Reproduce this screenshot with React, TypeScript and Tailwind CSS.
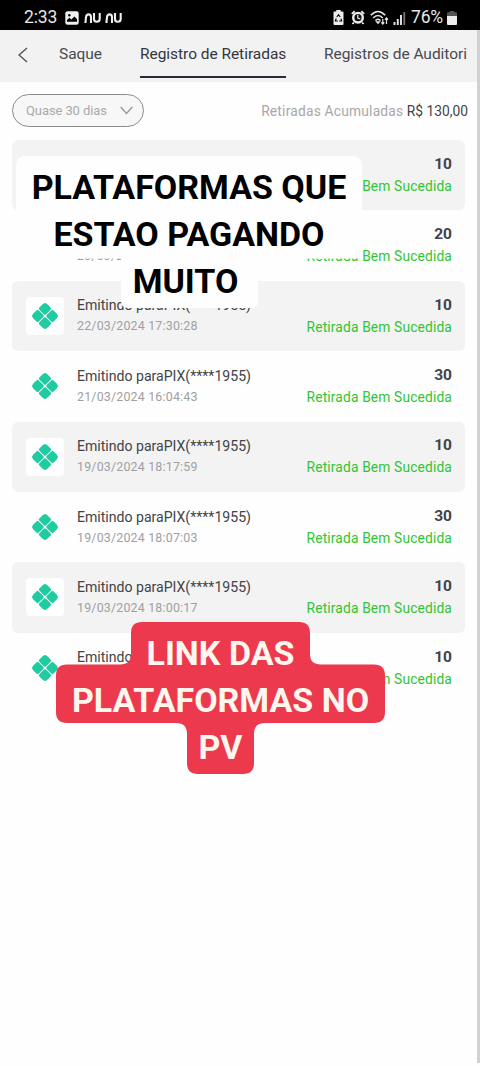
import React from 'react';

type Entry = { date: string; amount: string };

const entries: Entry[] = [
  { date: '24/03/2024 16:22:10', amount: '10' },
  { date: '23/03/2024 17:12:35', amount: '20' },
  { date: '22/03/2024 17:30:28', amount: '10' },
  { date: '21/03/2024 16:04:43', amount: '30' },
  { date: '19/03/2024 18:17:59', amount: '10' },
  { date: '19/03/2024 18:07:03', amount: '30' },
  { date: '19/03/2024 18:00:17', amount: '10' },
  { date: '19/03/2024 17:51:26', amount: '10' },
];

function PixIcon() {
  return (
    <svg viewBox="0 0 26 26" className="size-[26px]" fill="#1fcba0">
      <g transform="rotate(45 13 13)">
        <rect x="3" y="3" width="9.5" height="9.5" rx="1.6" />
        <rect x="13.5" y="3" width="9.5" height="9.5" rx="1.6" />
        <rect x="3" y="13.5" width="9.5" height="9.5" rx="1.6" />
        <rect x="13.5" y="13.5" width="9.5" height="9.5" rx="1.6" />
        <path d="M2.5 2.5H6Q2.5 2.5 2.5 6ZM23.5 2.5V6Q23.5 2.5 20 2.5ZM23.5 23.5H20Q23.5 23.5 23.5 20ZM2.5 23.5V20Q2.5 23.5 6 23.5Z" fill="#fff" stroke="#fff" strokeWidth="1.2" />
      </g>
    </svg>
  );
}

function NuLogo() {
  return (
    <svg viewBox="0 0 18 12" className="h-3 w-[18px]" fill="none" stroke="#eee" strokeWidth="2.1">
      <path d="M1.4 11L2 5.2Q2.4 2.4 4.6 2.4Q7 2.4 7 5.2V11" />
      <path d="M10 1V7Q10 9.8 12.7 9.8Q15.7 9.8 15.7 7V1" />
    </svg>
  );
}

function StatusBar() {
  return (
    <div className="flex h-[30px] items-center bg-black pl-6 pt-[5px] text-[#e6e6e6]">
      <span className="w-[41px] whitespace-nowrap text-[17.5px] tracking-[-0.1px]">2:33</span>
      <svg viewBox="0 0 14 14" className="size-3.5">
        <rect x=".3" y=".3" width="13.4" height="13.4" rx="2.2" fill="#eee" />
        <circle cx="4.3" cy="4.3" r="1.2" fill="#000" />
        <path d="M2 10.8V9L4.4 6.8L6.4 8.4L9.4 5.4L12 8V10.8Z" fill="#000" />
      </svg>
      <div className="ml-[5px] flex gap-[3px]">
        <NuLogo />
        <NuLogo />
      </div>
      <div className="ml-auto flex items-center pr-[23px]">
        <svg viewBox="0 0 11 15" className="h-[15px] w-[11px]">
          <path d="M3.3 0H7.7V1.5H9.5Q10.5 1.5 10.5 2.5V14Q10.5 15 9.5 15H1.5Q.5 15 .5 14V2.5Q.5 1.5 1.5 1.5H3.3Z" fill="#eee" />
          <path d="M3.8 7L5.5 4.6L7.2 7M8 8.6L8.6 11H6.2M4.8 11H2.4L3.2 8.4" fill="none" stroke="#000" strokeWidth="1.1" />
        </svg>
        <svg viewBox="0 0 14 15" className="ml-[7px] h-[15px] w-[14px]">
          <circle cx="7" cy="7.7" r="6" fill="#eee" />
          <path d="M.8 3.9L3.7 1.3M13.2 3.9L10.3 1.3M2.8 12.5L1.5 14M11.2 12.5L12.5 14" stroke="#eee" strokeWidth="1.9" />
          <circle cx="7" cy="7.7" r="3.6" fill="#111" />
          <path d="M6.8 4.8V8L9.3 9" fill="none" stroke="#eee" strokeWidth="1.2" />
        </svg>
        <svg viewBox="0 0 19 15" className="ml-[5px] h-[15px] w-[19px]" fill="none" stroke="#e6e6e6" strokeWidth="1.6">
          <path d="M.8 5.3Q8 -2.4 15.2 5.3M3.2 8Q8 3 12.8 8M5.5 10.6Q8 8 10.5 10.6" />
          <path d="M7 12L8 13.1L9 12Z" fill="#e6e6e6" />
          <path d="M12.8 9V14M11.3 12.3L12.8 14L14.3 12.3M16.5 14V8M15 9.7L16.5 8L18 9.7" strokeWidth="1.2" />
        </svg>
        <svg viewBox="0 0 13 14" className="ml-[4px] h-[14px] w-[13px]">
          <path d="M.5 11H2.5V14H.5ZM3.8 8H5.8V14H3.8ZM7 4H9V14H7Z" fill="#ddd" />
          <path d="M10.4 1H12.2V14H10.4Z" fill="#777" />
        </svg>
        <span className="ml-[5px] w-[36px] whitespace-nowrap text-[17.5px] tracking-[-0.2px]">76%</span>
        <svg viewBox="0 0 10 14" className="h-[14px] w-[10px]">
          <path d="M2.7 0H7.3V1.2H9Q10 1.2 10 2.2V5H0V2.2Q0 1.2 1 1.2H2.7Z" fill="#555" />
          <path d="M0 5H10V13Q10 14 9 14H1Q0 14 0 13Z" fill="#eee" />
        </svg>
      </div>
    </div>
  );
}

function Tabs() {
  return (
    <nav className="flex h-[52px] w-[477px] bg-[#f2f2f3] text-[15.5px] leading-[48px] tracking-[-0.04px] text-[#484a4f]">
      <svg viewBox="0 0 10 16" className="ml-[18px] mt-[17px] h-4 w-[10px]" fill="none" stroke="#55575b" strokeWidth="1.5">
        <path d="M9 1L1 8L9 15" />
      </svg>
      <span className="ml-[31px] w-[81px] whitespace-nowrap">Saque</span>
      <span className="h-12 w-[146px] whitespace-nowrap border-b-2 border-[#282c35] text-[#33363e]">Registro de Retiradas</span>
      <span className="ml-[38px] whitespace-nowrap">Registros de Auditori</span>
    </nav>
  );
}

function Row({ entry, shaded }: { entry: Entry; shaded: boolean }) {
  return (
    <li className={`flex h-[70.4px] rounded-md pl-[13.5px] pr-[13px] ${shaded ? 'bg-[#f3f3f4]' : ''}`}>
      <div className="mt-[16px] flex size-[38px] items-center justify-center rounded bg-[#fefefe]">
        <PixIcon />
      </div>
      <div className="ml-[13.5px] whitespace-nowrap pt-[14.7px]">
        <p className="text-[14.1px] leading-5 tracking-[-0.01px] text-[#424347]">Emitindo paraPIX(****1955)</p>
        <p className="text-[12.4px] leading-[21px] tracking-[0.2px] text-[#a0a0a2]">{entry.date}</p>
      </div>
      <div className="ml-auto whitespace-nowrap pt-[12.8px] text-right">
        <p className="text-[15.5px] font-bold leading-[22px] text-[#424347]">{entry.amount}</p>
        <p className="text-[13.8px] leading-[22.4px] tracking-[0.14px] text-[#32c532]">Retirada Bem Sucedida</p>
      </div>
    </li>
  );
}

export default function App() {
  return (
    <div className="relative h-[1066px] w-[480px] overflow-hidden bg-[#fefefe] font-[Roboto,sans-serif]">
      <StatusBar />
      <Tabs />
      <div className="flex h-[58px] items-start justify-between pl-3 pr-[12px] pt-3">
        <button className="flex h-[33px] w-[132px] items-center rounded-full border border-[#8b8b8b] bg-[#f7f7f7] pl-[13px] text-[13px] text-[#aaa]">
          <span className="w-[94px] whitespace-nowrap text-left tracking-[-0.1px]">Quase 30 dias</span>
          <svg viewBox="0 0 13 9" className="h-[9px] w-[13px]" fill="none" stroke="#999" strokeWidth="1.4">
            <path d="M.7 1L6.5 7.5L12.3 1" />
          </svg>
        </button>
        <p className="whitespace-nowrap text-[13.8px] leading-[34px] text-[#a8a8a9]">
          <span className="tracking-[0.2px]">Retiradas Acumuladas</span> <span className="text-[#424347]">R$ 130,00</span>
        </p>
      </div>
      <ul className="ml-3 w-[453px]">
        {entries.map((entry, i) => (
          <Row key={i} entry={entry} shaded={i % 2 === 0} />
        ))}
      </ul>

      <div className="absolute right-0 top-[30px] h-[1033px] w-[3px] bg-[#d1d0d4]" />

      <div className="absolute left-4 top-[156px] h-[152px] w-[346px]">
        <svg viewBox="0 0 346 152" className="absolute inset-0 h-full w-full">
          <path d="M11 0H335Q346 0 346 11V97Q346 102.5 341 102.5H242V145Q242 152 235 152H112Q105 152 105 145V102.5H5Q0 102.5 0 97V11Q0 0 11 0Z" fill="#fefefe" />
        </svg>
        <p className="relative whitespace-nowrap pt-[8px] text-center text-[34px] font-bold leading-[47px] text-black">
          <span className="block">PLATAFORMAS QUE</span>
          <span className="block">ESTAO PAGANDO</span>
          <span className="block pr-[7px]">MUITO</span>
        </p>
      </div>

      <div className="absolute left-[56px] top-[622px] h-[152px] w-[329px]">
        <svg viewBox="0 0 329 152" className="absolute inset-0 h-full w-full">
          <path
            d="M86 0H243Q254 0 254 11V32Q254 42.5 265 42.5H318Q329 42.5 329 53.5V90Q329 101 318 101H209Q198 101 198 112V141Q198 152 187 152H142Q131 152 131 141V112Q131 101 120 101H11Q0 101 0 90V53.5Q0 42.5 11 42.5H64Q75 42.5 75 32V11Q75 0 86 0Z"
            fill="#ec394d"
          />
        </svg>
        <p className="relative whitespace-nowrap pt-[8px] text-center text-[34px] font-bold leading-[47px] text-[#fff7ee]">
          <span className="block">LINK DAS</span>
          <span className="block">PLATAFORMAS NO</span>
          <span className="block">PV</span>
        </p>
      </div>
    </div>
  );
}
